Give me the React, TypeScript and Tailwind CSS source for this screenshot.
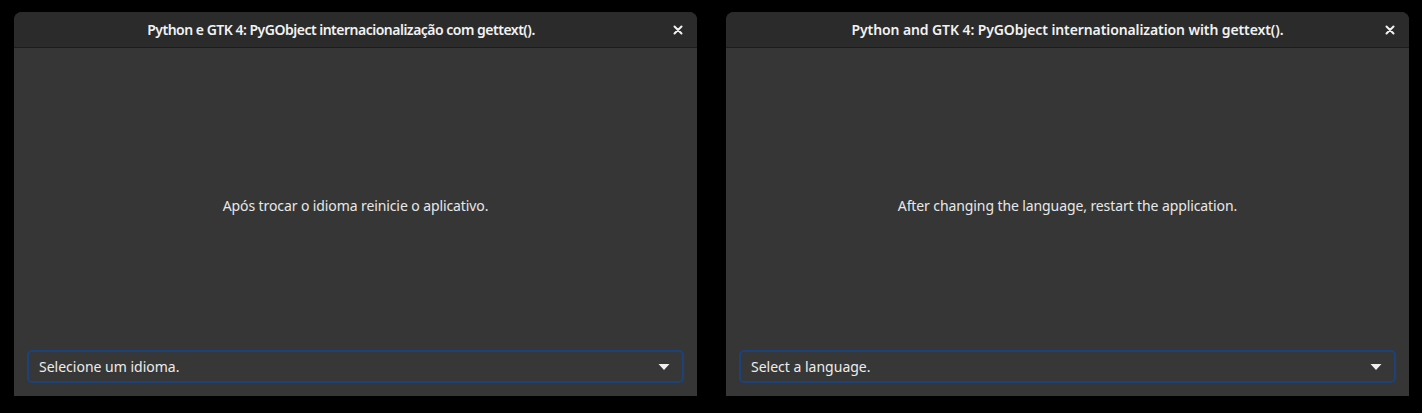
import React from "react";

interface WindowProps {
  title: string;
  message: string;
  placeholder: string;
  headerClass?: string;
  titleClass?: string;
}

const GtkWindow: React.FC<WindowProps> = ({
  title,
  message,
  placeholder,
  headerClass = "",
  titleClass = "",
}) => {
  return (
    <div className="flex flex-col w-[683px] h-[384px] rounded-t-[8px] overflow-hidden bg-[#363636]">
      {/* Header bar */}
      <div
        className={`relative flex items-center justify-center h-[36px] shrink-0 bg-[#2b2b2b] border-b border-[#1c1c1c] ${headerClass}`}>
        <span className={`text-[14px] font-semibold text-[#f2f2f2] ${titleClass}`}>{title}</span>
        <button className="absolute right-[12px] top-[11px] w-[14px] h-[14px] flex items-center justify-center">
          <svg width="10" height="10" viewBox="0 0 10 10">
            <path d="M1.5 1.5L8.5 8.5M8.5 1.5L1.5 8.5" stroke="#f2f2f2" strokeWidth="2" strokeLinecap="round" />
          </svg>
        </button>
      </div>

      {/* Content */}
      <div className="flex-1 flex items-center justify-center pt-[12px]">
        <span className="text-[14px] text-[#e8e8e8] tracking-[-0.1px]">{message}</span>
      </div>

      {/* Dropdown */}
      <div className="px-[13px] pb-[13px]">
        <div className="flex items-center justify-between h-[33px] rounded-[5px] border-2 border-[#1d4279] bg-[#373737] pl-[10px] pr-[12px]">
          <span className="text-[14px] text-[#ececec]">{placeholder}</span>
          <svg width="12" height="8" viewBox="0 0 12 8">
            <path d="M0.5 1L11.5 1L6 7Z" fill="#f0f0f0" />
          </svg>
        </div>
      </div>
    </div>
  );
};

export default function App() {
  return (
    <div
      className="w-[1422px] h-[413px] bg-black flex gap-[29px] pl-[14px] pt-[12px]"
      style={{ fontFamily: '"Noto Sans", "Open Sans", sans-serif' }}>
      <GtkWindow
        title="Python e GTK 4: PyGObject internacionalização com gettext()."
        message="Após trocar o idioma reinicie o aplicativo."
        placeholder="Selecione um idioma."
        headerClass="pr-[29px]"
        titleClass="tracking-[-0.5px]"
      />
      <GtkWindow
        title="Python and GTK 4: PyGObject internationalization with gettext()."
        message="After changing the language, restart the application."
        placeholder="Select a language."
        titleClass="tracking-[-0.1px]"
      />
    </div>
  );
}
